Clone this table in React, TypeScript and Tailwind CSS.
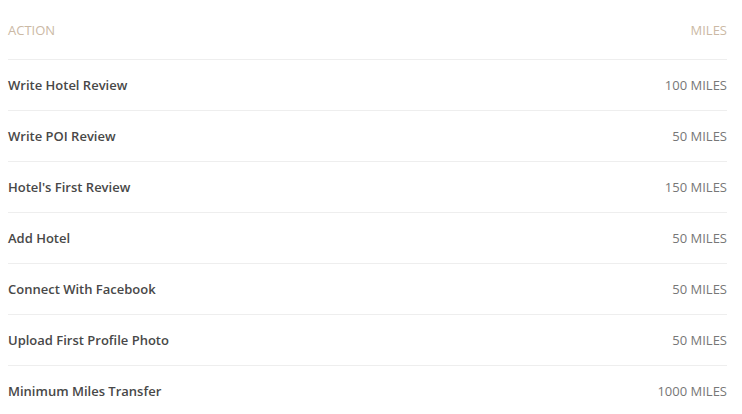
const rows = [
  { action: 'Write Hotel Review', miles: '100 MILES' },
  { action: 'Write POI Review', miles: '50 MILES' },
  { action: "Hotel's First Review", miles: '150 MILES' },
  { action: 'Add Hotel', miles: '50 MILES' },
  { action: 'Connect With Facebook', miles: '50 MILES' },
  { action: 'Upload First Profile Photo', miles: '50 MILES' },
  { action: 'Minimum Miles Transfer', miles: '1000 MILES' },
];

export default function App() {
  return (
    <div className="min-h-screen bg-white font-['Open_Sans',sans-serif]">
      <div className="pl-2 pr-[15px]">
        <div className="flex h-[59px] items-center justify-between pt-[2px] text-[13px] text-[#cbb9a5]">
          <span>ACTION</span>
          <span>MILES</span>
        </div>
        {rows.map((r) => (
          <div
            key={r.action}
            className="flex h-[51px] items-center justify-between border-t border-[#eeeeee] pt-[2px] text-[13px]"
          >
            <span className="font-semibold text-[#484848]">{r.action}</span>
            <span className="text-[#777777]">{r.miles}</span>
          </div>
        ))}
      </div>
    </div>
  );
}
